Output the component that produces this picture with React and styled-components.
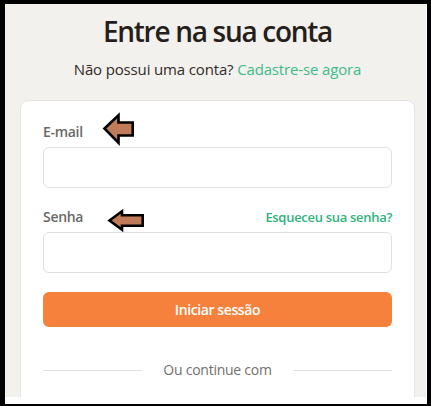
import React from "react";
import styled, { createGlobalStyle } from "styled-components";

const GlobalStyle = createGlobalStyle`
  html, body { margin: 0; padding: 0; background: #ffffff; }
  body { font-family: "Open Sans", "Noto Sans", Arial, sans-serif; }
  * { box-sizing: border-box; }
`;

const Frame = styled.div`
  position: relative;
  width: 431px;
  height: 406px;
  border-style: solid;
  border-color: #000;
  border-width: 4px 4px 2px 5px;
  padding: 0 1px 7px 0;
  background: #fff;
`;

const Viewport = styled.div`
  height: 100%;
  background: #f2f1ed;
  overflow: hidden;
  display: flex;
  flex-direction: column;
  align-items: stretch;
  padding: 9px 11px 0 15px;
`;

const Title = styled.h1`
  margin: 0;
  text-align: center;
  font-size: 28px;
  line-height: 36px;
  font-weight: 600;
  letter-spacing: -1.3px;
  color: #261e1a;
`;

const Subtitle = styled.p`
  margin: 10px 0 0;
  text-align: center;
  font-size: 15px;
  line-height: 20px;
  letter-spacing: -0.15px;
  color: #332b27;
`;

const Link = styled.a`
  color: #3dbb88;
  text-decoration: none;
  cursor: pointer;
`;

const ForgotLink = styled(Link)`
  color: #2fb27c;
  font-size: 13px;
  font-weight: 600;
  letter-spacing: -0.3px;
`;

const Card = styled.div`
  margin-top: 21px;
  background: #fff;
  border: 1px solid #e6e4df;
  border-radius: 8px;
  padding: 21px 22px 40px;
  flex: 1 0 auto;
`;

const Field = styled.div`
  display: flex;
  flex-direction: column;
  gap: 5px;
  margin-bottom: 19px;
`;

const LabelRow = styled.div`
  display: flex;
  justify-content: space-between;
  align-items: baseline;
`;

const Label = styled.label`
  font-size: 14px;
  line-height: 20px;
  font-weight: 600;
  letter-spacing: -0.3px;
  color: #6a6867;
`;

const Input = styled.input`
  height: 41px;
  width: 100%;
  border: 1px solid #e2e1de;
  border-radius: 6px;
  background: #fff;
  padding: 0 12px;
  font: inherit;
  outline: none;
`;

const Button = styled.button`
  width: 100%;
  height: 35px;
  border: none;
  border-radius: 6px;
  background: #f5813c;
  color: #fff;
  font-family: inherit;
  font-size: 14px;
  font-weight: 600;
  letter-spacing: -0.4px;
  cursor: pointer;
`;

const Divider = styled.div`
  margin-top: 33px;
  display: flex;
  align-items: center;
  gap: 21px;
  &::before, &::after {
    content: "";
    flex: 1;
    height: 1px;
    background: #e2e1de;
  }
`;

const DividerText = styled.span`
  font-size: 14px;
  line-height: 20px;
  letter-spacing: -0.25px;
  color: #727070;
`;

const Overlay = styled.svg`
  position: fixed;
  top: 0;
  left: 0;
  width: 431px;
  height: 406px;
  pointer-events: none;
`;

const ArrowShape = styled.polygon`
  fill: #c07b58;
  stroke: #000;
  stroke-width: 2.6;
  stroke-linejoin: miter;
`;

export default function App() {
  return (
    <>
      <GlobalStyle />
      <Frame>
        <Viewport>
          <Title>Entre na sua conta</Title>
          <Subtitle>
            Não possui uma conta? <Link>Cadastre-se agora</Link>
          </Subtitle>
          <Card>
            <Field>
              <LabelRow>
                <Label>E-mail</Label>
              </LabelRow>
              <Input type="email" />
            </Field>
            <Field>
              <LabelRow>
                <Label>Senha</Label>
                <ForgotLink>Esqueceu sua senha?</ForgotLink>
              </LabelRow>
              <Input type="password" />
            </Field>
            <Button>Iniciar sessão</Button>
            <Divider>
              <DividerText>Ou continue com</DividerText>
            </Divider>
          </Card>
        </Viewport>
      </Frame>
      <Overlay viewBox="0 0 431 406">
        <ArrowShape points="104.5,128.5 118.5,115.3 118.5,122.5 132.7,122.5 132.7,135.5 118.5,135.5 118.5,142.8" />
        <ArrowShape points="109.5,220.5 122,211.3 122,215.3 142.7,215.3 142.7,225.7 122,225.7 122,229.7" />
      </Overlay>
    </>
  );
}
